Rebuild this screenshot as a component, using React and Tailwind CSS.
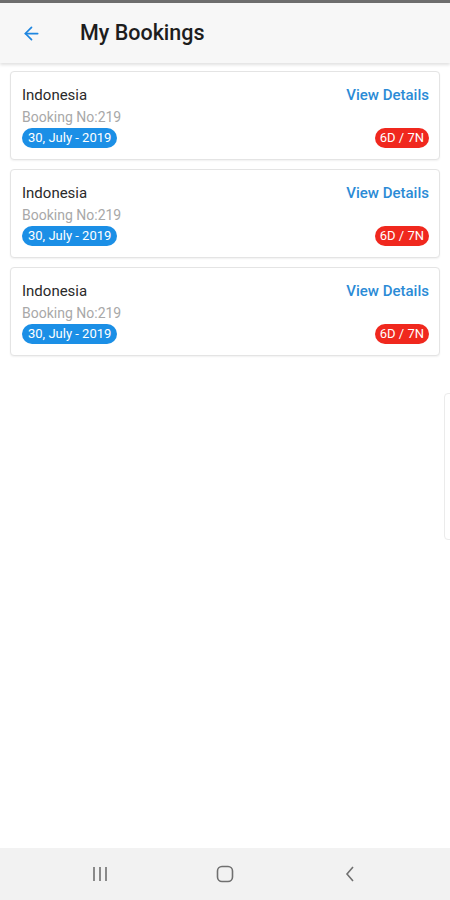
import { ArrowLeft } from 'lucide-react';

const bookings = [
  { id: 1, place: 'Indonesia', no: '219', date: '30, July - 2019', stay: '6D / 7N' },
  { id: 2, place: 'Indonesia', no: '219', date: '30, July - 2019', stay: '6D / 7N' },
  { id: 3, place: 'Indonesia', no: '219', date: '30, July - 2019', stay: '6D / 7N' },
];

function BookingCard({ item }) {
  return (
    <div className="h-[89px] bg-white border border-[#e4e4e4] rounded-[4px] shadow-[0_1px_2px_rgba(0,0,0,0.06)] pl-[11px] pr-[10px] pt-[13px] flex flex-col">
      <div className="h-[20px] flex items-center justify-between">
        <span className="text-[15px] text-[#2a2a2a]">{item.place}</span>
        <span className="text-[15px] font-medium text-[#2b8bd6]">View Details</span>
      </div>
      <div className="h-[20px] mt-[2px] flex items-center">
        <span className="text-[14px] text-[#a8a8a8]">Booking No:{item.no}</span>
      </div>
      <div className="h-[20px] mt-[1px] flex items-center justify-between">
        <span className="h-[20px] px-[6px] rounded-full bg-[#1b8fe6] text-white text-[13px] leading-[20px]">
          {item.date}
        </span>
        <span className="h-[20px] px-[5px] rounded-full bg-[#f0281e] text-white text-[13px] leading-[20px]">
          {item.stay}
        </span>
      </div>
    </div>
  );
}

export default function App() {
  return (
    <div className="w-[450px] h-[900px] bg-white flex flex-col relative overflow-hidden font-['Roboto',sans-serif]">
      {/* status strip */}
      <div className="h-[3px] bg-[#6e6e6e]" />

      {/* ── HEADER ───────────────────────────────────── */}
      <div className="h-[60px] bg-[#f7f7f7] flex items-center shadow-[0_2px_3px_rgba(0,0,0,0.12)] z-10">
        <ArrowLeft className="ml-[21px] w-[21px] h-[21px] text-[#1f86e0]" strokeWidth={2} />
        <span className="ml-[38px] text-[21.5px] font-medium text-[#1d1d1d]">My Bookings</span>
      </div>

      {/* ── LIST ─────────────────────────────────────── */}
      <div className="flex-1 px-[10px] pt-[8px] flex flex-col gap-[9px]">
        {bookings.map((b) => (
          <BookingCard key={b.id} item={b} />
        ))}
      </div>

      {/* drawer edge peeking in */}
      <div className="absolute left-[444px] top-[393px] w-[12px] h-[147px] border border-[#ebebeb] rounded-l-[4px] bg-white" />

      {/* ── SYSTEM NAV ───────────────────────────────── */}
      <div className="h-[52px] bg-[#f2f2f2] flex items-center">
        <div className="w-[200px] flex justify-center">
          <svg width="18" height="16" viewBox="0 0 18 16" fill="none" stroke="#707070" strokeWidth="1.6">
            <path d="M3 1v14M9 1v14M15 1v14" />
          </svg>
        </div>
        <div className="w-[50px] flex justify-center">
          <svg width="18" height="18" viewBox="0 0 18 18" fill="none" stroke="#707070" strokeWidth="1.6">
            <rect x="1.5" y="1.5" width="15" height="15" rx="4.5" />
          </svg>
        </div>
        <div className="w-[200px] flex justify-center">
          <svg width="12" height="18" viewBox="0 0 12 18" fill="none" stroke="#707070" strokeWidth="1.6">
            <path d="M9 2L3 9l6 7" />
          </svg>
        </div>
      </div>
    </div>
  );
}
